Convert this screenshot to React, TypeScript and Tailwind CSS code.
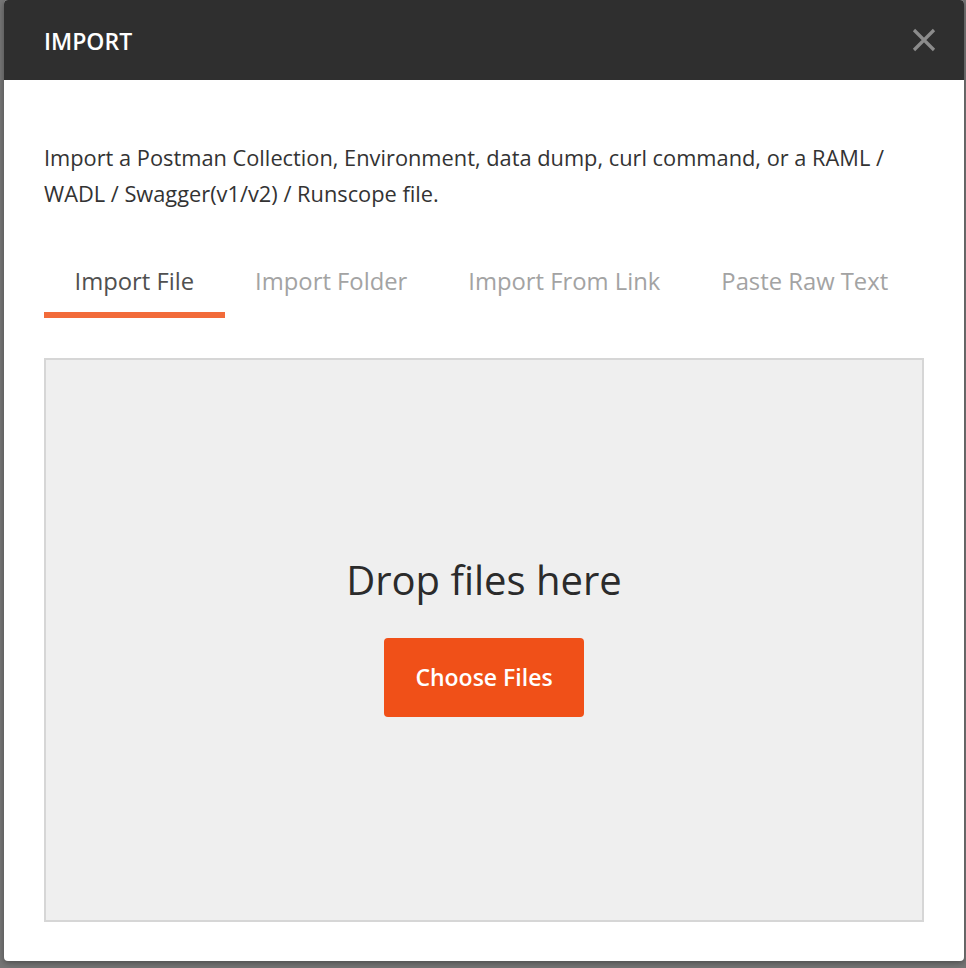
import React from "react";

const tabs = ["Import File", "Import Folder", "Import From Link", "Paste Raw Text"];

function CloseIcon() {
  return (
    <svg width="24" height="24" viewBox="0 0 24 24" className="text-[#8c8c8c]">
      <path d="M2 2L22 22M22 2L2 22" stroke="currentColor" strokeWidth="3.2" strokeLinecap="butt" />
    </svg>
  );
}

export default function App() {
  return (
    <div
      className="w-[966px] h-[968px] bg-[#767676] overflow-hidden"
      style={{ fontFamily: '"Open Sans", "Noto Sans", sans-serif' }}
    >
      <div className="ml-[4px] w-[960px] h-[961px] bg-white rounded-[4px] overflow-hidden flex flex-col shadow-[0_2px_6px_rgba(0,0,0,0.35)]">
        <div className="h-[80px] shrink-0 bg-[#2f2f2f] flex items-center justify-between pl-[40px] pr-[28px]">
          <span className="text-white text-[23px] font-semibold mt-[2px]">IMPORT</span>
          <button className="w-[24px] h-[24px] flex items-center justify-center">
            <CloseIcon />
          </button>
        </div>

        <div className="flex-1 flex flex-col px-[40px] pb-[39px]">
          <p className="mt-[60px] text-[21.8px] leading-[36px] text-[#333333] whitespace-nowrap">
            Import a Postman Collection, Environment, data dump, curl command, or a RAML /
            <br />
            WADL / Swagger(v1/v2) / Runscope file.
          </p>

          <div className="mt-[53px] flex">
            {tabs.map((t, i) => (
              <div
                key={t}
                className={
                  i === 0
                    ? "px-[30.5px] pb-[15px] border-b-[6px] border-[#f26b3a] text-[23.8px] leading-[32px] text-[#505050] whitespace-nowrap"
                    : "px-[30.5px] pb-[15px] border-b-[6px] border-transparent text-[23.8px] leading-[32px] text-[#a3a3a3] whitespace-nowrap"
                }
              >
                {t}
              </div>
            ))}
          </div>

          <div className="mt-[40px] flex-1 border-2 border-[#d6d6d6] bg-[#efefef] flex flex-col items-center justify-center">
            <div className="text-[40px] leading-[50px] text-[#2b2b2b] mt-[-8px]">Drop files here</div>
            <button className="mt-[33px] w-[200px] h-[79px] rounded-[4px] bg-[#f05018] text-white text-[23px] font-semibold">
              Choose Files
            </button>
          </div>
        </div>
      </div>
    </div>
  );
}
